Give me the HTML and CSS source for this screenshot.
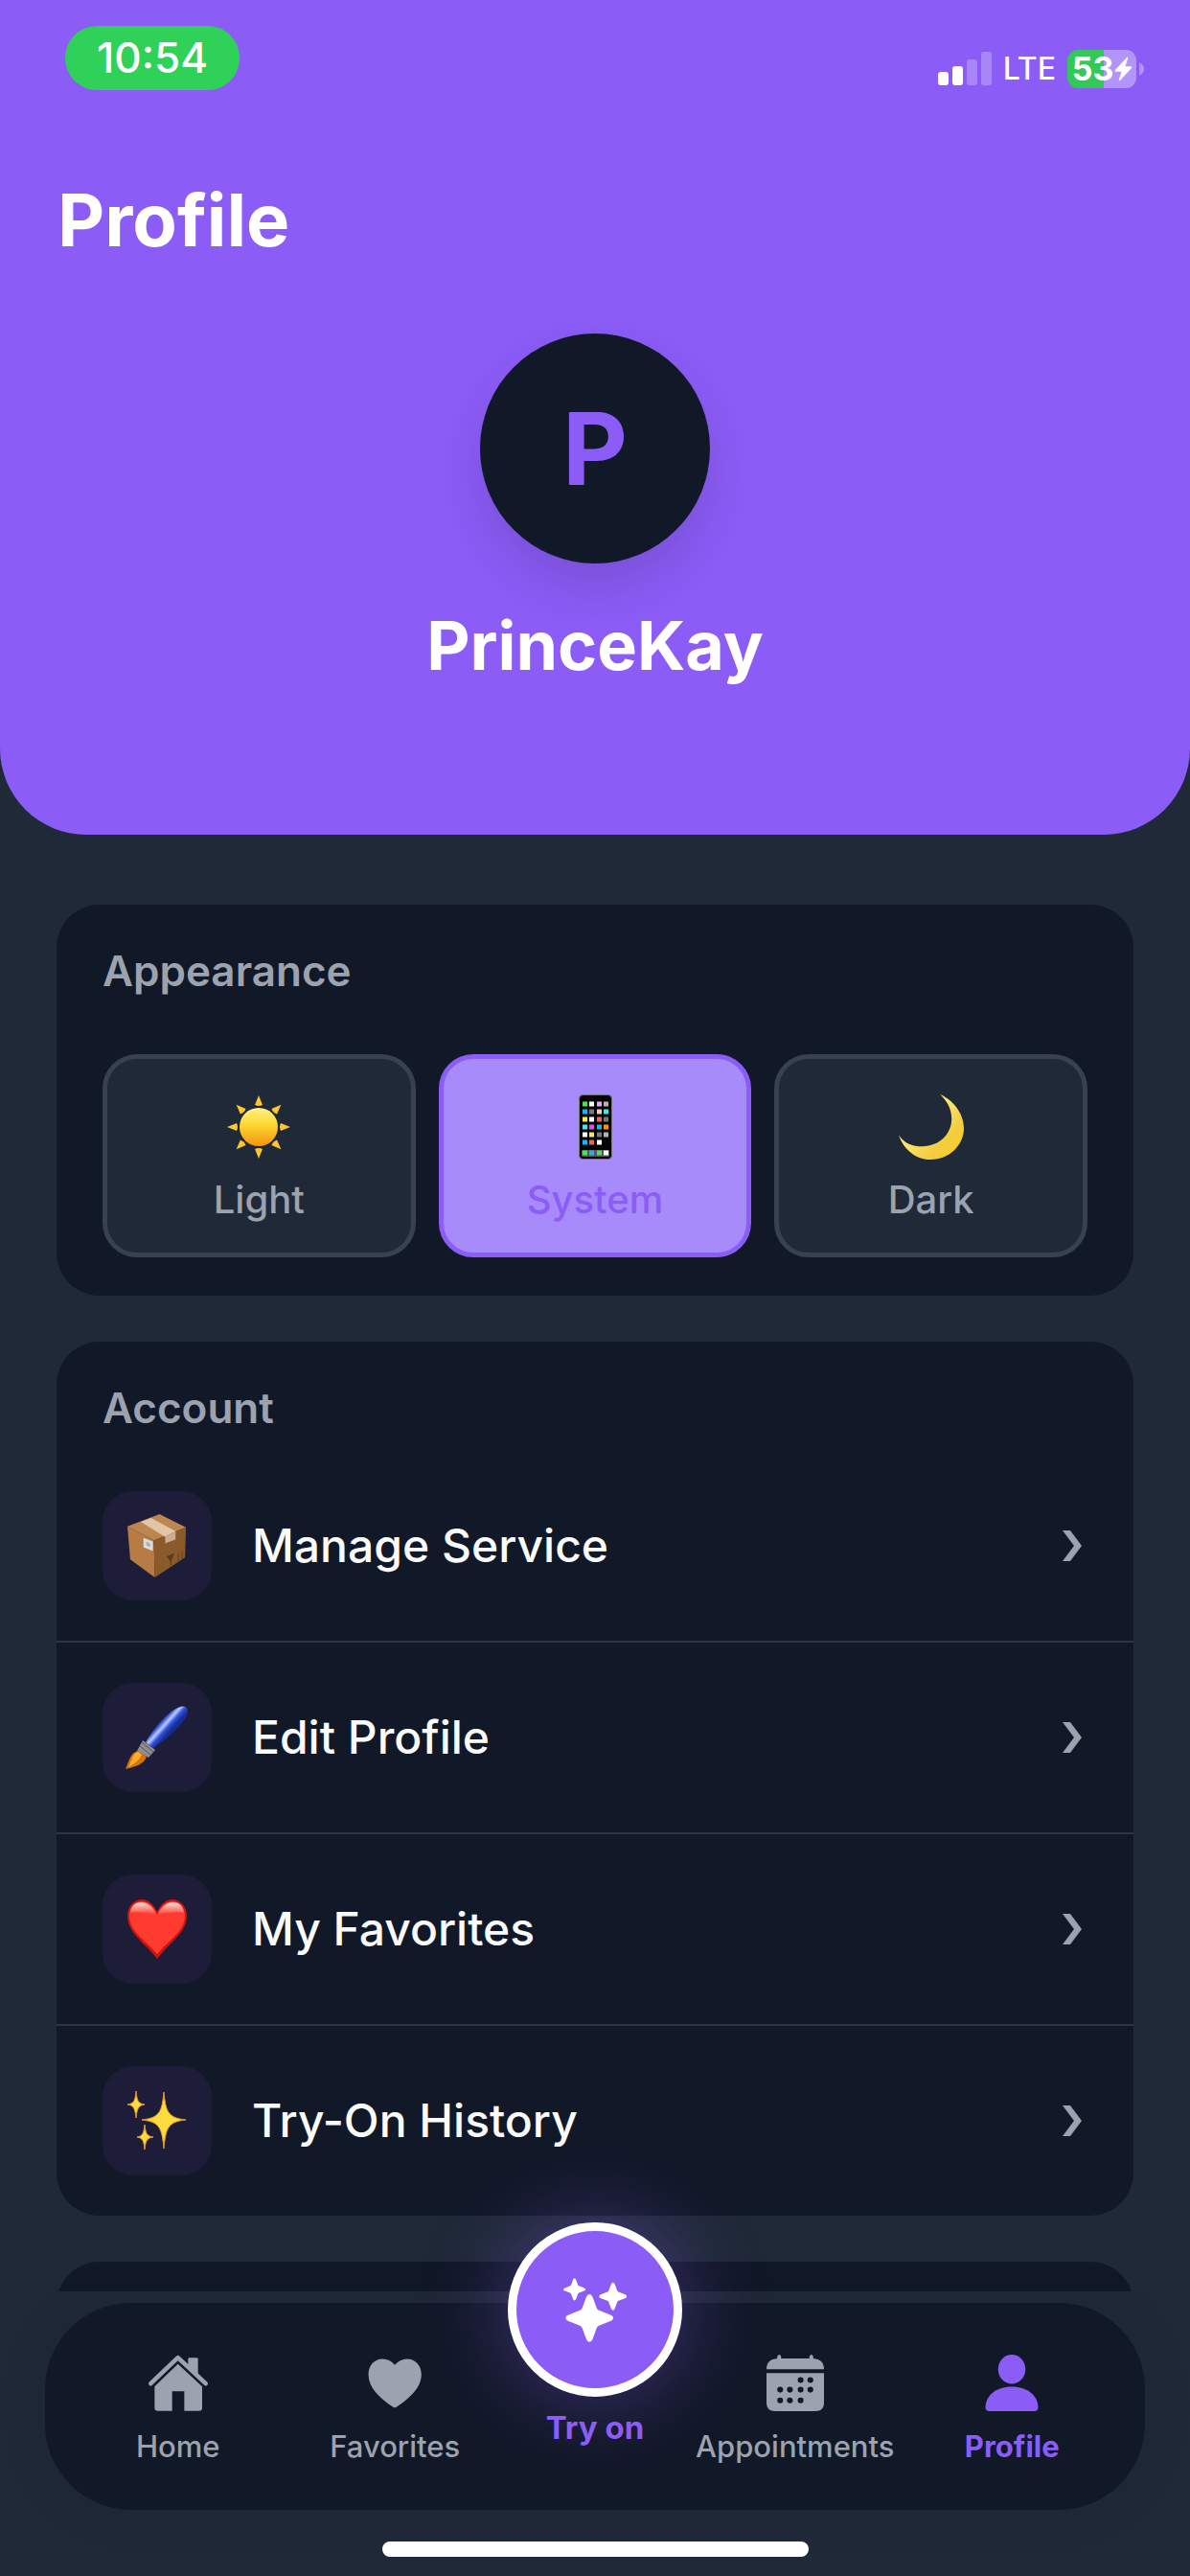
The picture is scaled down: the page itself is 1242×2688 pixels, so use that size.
FILE: index.html
```html
<!DOCTYPE html>
<html lang="en">
<head>
  <meta charset="UTF-8">
  <meta name="viewport" content="width=device-width, initial-scale=1">
  <title>Profile</title>
  <link rel="stylesheet" href="styles.css">
</head>
<body>

  <header class="header">
    <div class="status-bar">
      <span class="clock">10:54</span>
      <div class="status-icons">
        <svg class="signal" viewBox="0 0 56 36" fill="#fff">
          <rect x="0" y="21" width="11" height="14" rx="3"/>
          <rect x="15" y="15" width="11" height="20" rx="3"/>
          <rect x="30" y="8" width="11" height="27" rx="3" opacity=".25"/>
          <rect x="45" y="0" width="11" height="35" rx="3" opacity=".25"/>
        </svg>
        <span class="network">LTE</span>
        <span class="battery">
          53
          <svg class="bolt" viewBox="0 0 18 26"><path d="M13 0 L0 14 Q-1 16 1 16 H7 L4 25 Q4 27 6 25 L18 12 Q19 10 17 10 H11 L14 1 Q14 -1 13 0z" fill="#fff"/></svg>
        </span>
        <svg class="battery-tip" viewBox="0 0 5 14"><path d="M0 0 Q5 3 5 7 T0 14z" fill="#fff" opacity=".35"/></svg>
      </div>
    </div>
    <h1 class="title">Profile</h1>
    <div class="avatar">P</div>
    <p class="username">PrinceKay</p>
  </header>

  <main class="content">
    <section class="card">
      <h2 class="card-title">Appearance</h2>
      <div class="themes">
        <button class="theme" type="button">
          <svg class="theme-icon" viewBox="-34 -34 68 68">
            <defs>
              <linearGradient id="sun" x1="0" y1="0" x2="0" y2="1">
                <stop offset="0" stop-color="#fff08a"/>
                <stop offset=".4" stop-color="#fddc35"/>
                <stop offset="1" stop-color="#f3920f"/>
              </linearGradient>
              <path id="ray" d="M0 -33 L4 -23 Q0 -21 -4 -23z"/>
            </defs>
            <circle r="20" fill="url(#sun)"/>
            <g fill="#fdc52f">
              <use href="#ray"/>
              <use href="#ray" transform="rotate(45)"/>
              <use href="#ray" transform="rotate(90)"/>
              <use href="#ray" transform="rotate(135)"/>
              <use href="#ray" transform="rotate(180)"/>
              <use href="#ray" transform="rotate(225)"/>
              <use href="#ray" transform="rotate(270)"/>
              <use href="#ray" transform="rotate(315)"/>
            </g>
          </svg>
          <span>Light</span>
        </button>
        <button class="theme selected" type="button">
          <svg class="theme-icon" viewBox="-17 0 68 68">
            <rect x=".5" y=".5" width="34" height="67" rx="4" fill="#050505" stroke="#77727d"/>
            <rect x="3" y="58" width="29" height="7" rx="1" fill="#555"/>
            <g stroke-width="5" stroke-dasharray="5 50">
              <path d="M4 10h5M4 61h5M19 61h5" stroke="#4be05c"/>
              <path d="M11 10h5M4 42h5M11 26h5M19 50h5M26 61h5" stroke="#fff"/>
              <path d="M19 10h5" stroke="#eba5f7"/>
              <path d="M26 10h5M26 42h5" stroke="#b5b0b0"/>
              <path d="M4 18h5M19 34h5M4 50h5M11 61h5" stroke="#18b4f8"/>
              <path d="M11 18h5M26 26h5M19 42h5" stroke="#777"/>
              <path d="M19 18h5" stroke="#f5ceaa"/>
              <path d="M26 18h5M4 34h5" stroke="#49e4f1"/>
              <path d="M4 26h5M11 42h5" stroke="#f8ec4c"/>
              <path d="M19 26h5M11 50h5" stroke="#fb5d51"/>
              <path d="M11 34h5" stroke="#ec47ef"/>
              <path d="M26 34h5" stroke="#ff9500"/>
            </g>
          </svg>
          <span>System</span>
        </button>
        <button class="theme" type="button">
          <svg class="theme-icon" viewBox="0 0 69 69">
            <defs>
              <linearGradient id="moon" x1="0" y1="0" x2="1" y2="1">
                <stop offset=".4" stop-color="#ffe672"/>
                <stop offset=".7" stop-color="#f3cd42"/>
                <stop offset="1" stop-color="#ffc91c"/>
              </linearGradient>
            </defs>
            <path d="M44 0 C59 7 69 21 69 36 C69 54 53 69 34 69 C18 69 5 58 0 43 C6 52 15 55 25 55 C43 55 56 42 56 26 C56 15 51 7 44 0z" fill="url(#moon)"/>
          </svg>
          <span>Dark</span>
        </button>
      </div>
    </section>

    <section class="card">
      <h2 class="card-title">Account</h2>
      <a class="row" href="#">
        <span class="row-icon">
          <svg viewBox="0 0 62 67">
            <path d="M34 0 L62 14 L28 28 L0 13z" fill="#bd8651"/>
            <path d="M0 13 L28 28 L29 67 L3 48z" fill="#b77b46"/>
            <path d="M62 14 L28 28 L29 67 L61 46z" fill="#8a5a2b"/>
            <path d="M14 8 L25 4 L51 18 L40 24z" fill="#e2c5a6"/>
            <path d="M40 24 L51 18 V27 L40 31z" fill="#c9ad91"/>
            <path d="M17 25 L27 29 V39 L17 35z" fill="#dcdcdc"/>
            <path d="M20 29 L24 31 V35 L20 33z" fill="#b3adaa"/>
            <path d="M42 45 L49 42 L46 50z M46 48 V54 M54 41 V50 M58 39 V48" fill="#5f3c19" stroke="#5f3c19"/>
          </svg>
        </span>
        <span class="row-label">Manage Service</span>
        <svg class="chevron" viewBox="0 0 20 32"><path d="M0 0 H8 L20 16 L8 32 H0 L12 16z"/></svg>
      </a>
      <a class="row" href="#">
        <span class="row-icon">
          <svg viewBox="0 0 66 66">
            <defs>
              <linearGradient id="handle" gradientUnits="userSpaceOnUse" x1="37" y1="17" x2="47" y2="26">
                <stop offset="0" stop-color="#2340c4"/>
                <stop offset=".35" stop-color="#b9cbff"/>
                <stop offset=".65" stop-color="#3050dc"/>
                <stop offset="1" stop-color="#172c91"/>
              </linearGradient>
            </defs>
            <path d="M21 38 C30 22 45 5 57 1 Q65 -1 65 7 C63 17 44 34 29 44z" fill="url(#handle)"/>
            <path d="M18 36 L31 46 L24 54 L12 47z" fill="#8e8e91"/>
            <path d="M17 38 L29 48 M15 42 L26 51" stroke="#555" stroke-width="1"/>
            <path d="M13 47 L22 53 C19 61 12 63 0 66 C4 57 5 49 13 47z" fill="#d3730a"/>
            <path d="M13 48 L17 51 C14 57 10 60 3 64 C7 57 7 50 13 48z" fill="#ffac2a"/>
          </svg>
        </span>
        <span class="row-label">Edit Profile</span>
        <svg class="chevron" viewBox="0 0 20 32"><path d="M0 0 H8 L20 16 L8 32 H0 L12 16z"/></svg>
      </a>
      <a class="row" href="#">
        <span class="row-icon">
          <svg viewBox="0 -2 62 66">
            <defs>
              <linearGradient id="gloss" x1="0" y1="0" x2="0" y2="1">
                <stop offset="0" stop-color="#fff" stop-opacity=".85"/>
                <stop offset="1" stop-color="#fff" stop-opacity="0"/>
              </linearGradient>
            </defs>
            <path d="M31 13 C27 4 21 0 15 0 C6 0 0 8 0 17 C0 35 18 45 31 62 C44 45 62 35 62 17 C62 8 56 0 47 0 C41 0 35 4 31 13z" fill="#c9140f"/>
            <path d="M31 16 C27 6 21 2 15 2 C7 2 2 9 2 17 C2 33 18 42 31 57 C44 42 60 33 60 17 C60 9 55 2 47 2 C41 2 35 6 31 16z" fill="#ff3b30"/>
            <path d="M3 14 C4 -1 24 -1 30 16 Q16 12 3 14z M59 14 C58 -1 38 -1 32 16 Q46 12 59 14z" fill="url(#gloss)"/>
          </svg>
        </span>
        <span class="row-label">My Favorites</span>
        <svg class="chevron" viewBox="0 0 20 32"><path d="M0 0 H8 L20 16 L8 32 H0 L12 16z"/></svg>
      </a>
      <a class="row" href="#">
        <span class="row-icon">
          <svg viewBox="0 -3 62 66" fill="#ffdc3c" stroke="#e8952e">
            <path d="M38 0 C40 20 42 27 61 29 C42 31 40 38 38 59 C36 38 34 31 15 29 C34 27 36 20 38 0z"/>
            <path d="M9 -1 C10 9 11 12 18 13 C11 14 10 18 9 27 C8 18 7 14 0 13 C7 12 8 9 9 -1z"/>
            <path d="M18 34 C19 43 20 46 27 47 C20 48 19 51 18 60 C17 51 16 48 10 47 C16 46 17 43 18 34z"/>
          </svg>
        </span>
        <span class="row-label">Try-On History</span>
        <svg class="chevron" viewBox="0 0 20 32"><path d="M0 0 H8 L20 16 L8 32 H0 L12 16z"/></svg>
      </a>
    </section>

    <section class="card next-card"></section>
  </main>

  <footer class="footer">
    <nav class="tabs">
      <a class="tab" href="#">
        <svg class="tab-icon" viewBox="369 475 186 177" fill="currentColor">
          <path d="M376 564 L461 483 L548 564" fill="none" stroke="currentColor" stroke-width="14" stroke-linecap="round" stroke-linejoin="round"/>
          <path d="M493 505 V487 Q493 483 497 483 H520 Q524 483 524 487 V536z"/>
          <path d="M461 503 L537 573 V640 Q537 650 527 650 H481 V588 H443 V650 H398 Q388 650 388 640 V573z"/>
        </svg>
        <span>Home</span>
      </a>
      <a class="tab" href="#">
        <svg class="tab-icon" viewBox="1053 475 180 177" fill="currentColor">
          <path d="M1143 507 C1133 494 1120 488 1106 488 C1080 488 1062 508 1062 536 C1062 576 1096 608 1137 636 Q1143 640 1149 636 C1190 608 1225 576 1225 536 C1225 508 1206 488 1181 488 C1166 488 1153 495 1143 507z"/>
        </svg>
        <span>Favorites</span>
      </a>
      <a class="tab try-on" href="#">
        <span class="try-button">
          <svg class="sparkles" viewBox="324 262 202 202" fill="#fff">
            <defs>
              <path id="star" d="M0 -75 Q7 -75 10 -66 L23 -31 Q25 -26 30 -24 L66 -10 Q75 -7 75 0 Q75 7 66 10 L30 24 Q25 26 23 31 L10 66 Q7 75 0 75 Q-7 75 -10 66 L-23 31 Q-25 26 -30 24 L-66 10 Q-75 7 -75 0 Q-75 -7 -66 -10 L-30 -24 Q-25 -26 -23 -31 L-10 -66 Q-7 -75 0 -75z"/>
            </defs>
            <use href="#star" transform="translate(406 388)"/>
            <use href="#star" transform="translate(359 298) scale(.46)"/>
            <use href="#star" transform="translate(480 320) scale(.58)"/>
          </svg>
        </span>
        <span>Try on</span>
      </a>
      <a class="tab" href="#">
        <svg class="tab-icon" viewBox="0 0 59 59" fill="currentColor">
          <path d="M11 5 V2 Q13 -2 15 2 V4 H44 V2 Q46 -2 48 2 V4 Q59 5 59 15 H0 Q0 5 11 4z"/>
          <path d="M0 19 H59 V50 Q59 58 50 58 H9 Q0 58 0 50z"/>
          <g fill="#111827">
            <circle cx="35" cy="26" r="3"/><circle cx="45" cy="26" r="3"/>
            <circle cx="14" cy="36" r="3"/><circle cx="24" cy="36" r="3"/><circle cx="35" cy="36" r="3"/><circle cx="45" cy="36" r="3"/>
            <circle cx="14" cy="47" r="3"/><circle cx="24" cy="47" r="3"/><circle cx="35" cy="47" r="3"/>
          </g>
        </svg>
        <span>Appointments</span>
      </a>
      <a class="tab active" href="#">
        <svg class="tab-icon" viewBox="0 0 54 59" fill="currentColor">
          <ellipse cx="27" cy="15" rx="14" ry="15"/>
          <path d="M0 54 C0 43 10 33 27 33 S54 43 54 54 Q54 58 50 58 H4 Q0 58 0 54z"/>
        </svg>
        <span>Profile</span>
      </a>
    </nav>
    <div class="home-indicator"></div>
  </footer>

</body>
</html>
```
FILE: styles.css
```css
* {
  box-sizing: border-box;
}

body {
  margin: 0;
  height: 100vh;
  display: flex;
  flex-direction: column;
  overflow: hidden;
  background: #1f2937;
  color: #f9fafb;
  font-family: Inter, "Liberation Sans", sans-serif;
}

h1, h2, p {
  margin: 0;
}

a {
  color: inherit;
  text-decoration: none;
}

svg {
  display: block;
  overflow: visible;
}

/* Header */
.header {
  flex: none;
  padding: 27px 60px 153px;
  background: #8b5cf6;
  border-radius: 0 0 90px 90px;
  color: #fff;
}

.status-bar {
  display: flex;
  justify-content: space-between;
  align-items: flex-end;
  margin: 0 -12px 88px 8px;
}

.clock {
  padding: 0 33px;
  border-radius: 33px;
  background: #30d158;
  font-size: 44px;
  font-weight: 500;
  line-height: 67px;
}

.status-icons {
  display: flex;
  align-items: center;
  padding-bottom: 2px;
}

.signal {
  width: 56px;
  height: 36px;
}

.network {
  margin: 0 12px;
  font-size: 32px;
  font-weight: 500;
  line-height: 40px;
}

.battery {
  display: flex;
  align-items: center;
  justify-content: center;
  gap: 2px;
  width: 72px;
  border-radius: 11px;
  background: linear-gradient(to right, #34c759 53%, rgba(255, 255, 255, 0.35) 53%);
  font-size: 34px;
  font-weight: 700;
  line-height: 40px;
}

.bolt {
  width: 17px;
  height: 26px;
}

.battery-tip {
  width: 5px;
  height: 14px;
  margin-left: 3px;
}

.title {
  font-size: 76px;
  font-weight: 700;
  line-height: 94px;
}

.avatar {
  width: 240px;
  height: 240px;
  margin: 72px auto 42px;
  border-radius: 50%;
  background: #111827;
  box-shadow: 0 24px 48px rgba(0, 0, 0, 0.12);
  color: #8b5cf6;
  font-size: 105px;
  font-weight: 700;
  line-height: 240px;
  text-align: center;
}

.username {
  font-size: 70px;
  font-weight: 700;
  line-height: 88px;
  text-align: center;
}

/* Cards */
.content {
  flex: 1;
  min-height: 0;
  overflow: hidden;
  padding: 73px 59px 0;
}

.card {
  margin-bottom: 48px;
  border-radius: 45px;
  background: #111827;
  overflow: hidden;
}

.card-title {
  padding: 42px 48px 18px;
  color: #9ca3af;
  font-size: 44px;
  font-weight: 600;
  line-height: 54px;
}

.next-card {
  height: 300px;
}

.themes {
  display: grid;
  grid-template-columns: repeat(3, 1fr);
  gap: 24px;
  padding: 42px 48px 40px;
}

.theme {
  display: flex;
  flex-direction: column;
  align-items: center;
  gap: 18px;
  padding: 37px 0 31px;
  border: 5px solid #374151;
  border-radius: 36px;
  background: #1f2937;
  color: #9ca3af;
  font-family: inherit;
  font-size: 40px;
  font-weight: 500;
  line-height: 48px;
}

.theme.selected {
  border-color: #8b5cf6;
  background: #a78bfa;
  color: #8b5cf6;
}

.theme-icon {
  width: 68px;
  height: 68px;
}

.row {
  display: flex;
  align-items: center;
  gap: 42px;
  padding: 42px 54px 42px 48px;
  border-bottom: 2px solid #2d3543;
}

.row:last-child {
  border-bottom: none;
}

.row-icon {
  display: flex;
  align-items: center;
  justify-content: center;
  width: 114px;
  height: 114px;
  border-radius: 32px;
  background: #1d1d39;
}

.row-icon svg {
  height: 66px;
}

.row-label {
  flex: 1;
  font-size: 48px;
  font-weight: 500;
  line-height: 60px;
}

.chevron {
  width: 20px;
  height: 32px;
  fill: #9ca3af;
}

/* Bottom tabs */
.footer {
  position: relative;
  flex: none;
  padding: 12px 47px 20px;
  background: #1f2937;
}

.tabs {
  display: grid;
  grid-template-columns: 12fr 13fr 10fr 13fr 12fr;
  align-items: start;
  padding: 54px 30px 48px;
  border-radius: 90px;
  background: #111827;
  box-shadow: 0 0 60px rgba(0, 0, 0, 0.08);
}

.tab {
  display: flex;
  flex-direction: column;
  align-items: center;
  gap: 18px;
  color: #9ca3af;
  font-size: 31px;
  font-weight: 500;
  line-height: 36px;
}

.tab.active {
  color: #8b5cf6;
  font-weight: 700;
}

.tab-icon {
  width: 62px;
  height: 60px;
}

.try-on {
  gap: 12px;
  margin: -138px 0 -20px;
  color: #8b5cf6;
  font-size: 33px;
  font-weight: 700;
  line-height: 40px;
}

.try-button {
  display: flex;
  align-items: center;
  justify-content: center;
  width: 182px;
  height: 182px;
  border: 9px solid #fff;
  border-radius: 50%;
  background: #8b5cf6;
  box-shadow: 0 0 90px rgba(139, 92, 246, 0.4);
}

.sparkles {
  width: 67px;
  height: 67px;
}

.home-indicator {
  width: 445px;
  height: 16px;
  margin: 33px auto 0;
  border-radius: 8px;
  background: #fff;
}
```
